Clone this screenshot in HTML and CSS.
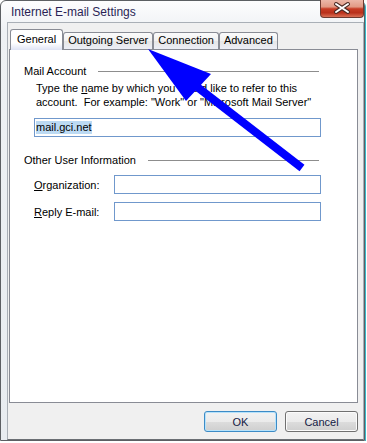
FILE: index.html
```html
<!DOCTYPE html>
<html lang="en">
<head>
    <meta charset="UTF-8">
    <meta name="viewport" content="width=device-width, initial-scale=1.0">
    <title>Internet E-mail Settings</title>
    <link rel="stylesheet" href="styles.css">
</head>
<body>
    <div class="window">
        <div class="titlebar">
            <span class="title">Internet E-mail Settings</span>
            <div class="close">
                <svg width="44" height="18" viewBox="0 0 44 18">
                    <path d="M16 5 L28 13 M28 5 L16 13" stroke="#4a2a24" stroke-width="4" stroke-linecap="round"/>
                    <path d="M16 5 L28 13 M28 5 L16 13" stroke="#fff" stroke-width="2" stroke-linecap="round"/>
                </svg>
            </div>
        </div>

        <div class="client">
            <div class="tabs">
                <div class="tab active">General</div>
                <div class="tab">Outgoing Server</div>
                <div class="tab">Connection</div>
                <div class="tab">Advanced</div>
            </div>

            <div class="panel">
                <div class="group-head"><span>Mail Account</span><i class="rule"></i></div>
                <p class="desc">Type the <u>n</u>ame by which you would like to refer to this<br>account.&nbsp; For example: "Work" or "Microsoft Mail Server"</p>
                <div class="field wide"><span class="sel">mail.gci.net</span></div>

                <div class="group-head second"><span>Other User Information</span><i class="rule"></i></div>
                <div class="row">
                    <label><u>O</u>rganization:</label>
                    <div class="field"></div>
                </div>
                <div class="row">
                    <label><u>R</u>eply E-mail:</label>
                    <div class="field"></div>
                </div>
            </div>

            <div class="buttons">
                <button class="default">OK</button>
                <button>Cancel</button>
            </div>
        </div>
    </div>

    <!-- blue pointer drawn over the dialog -->
    <svg class="arrow" width="367" height="443" viewBox="0 0 367 443">
        <line x1="192" y1="83" x2="302" y2="168" stroke="#0000ff" stroke-width="8"/>
        <polygon points="148,49 211,74 186,101" fill="#0000ff"/>
    </svg>
</body>
</html>
```

FILE: styles.css
```css
body {
    margin: 0;
    background: #fff;
    font-family: 'Liberation Sans', Arial, sans-serif;
    font-size: 11px;
    color: #000;
    position: relative;
}
.window {
    width: 365px;
    height: 441px;
    box-sizing: border-box;
    border: 1px solid #5c5f63;
    border-radius: 6px 6px 0 0;
    background: linear-gradient(#fdfdfe, #eef1f4 30px, #e8ecf0);
    box-shadow: 1px 1px 0 #35b9c9;
    display: flex;
    flex-direction: column;
}
.titlebar {
    height: 21px;
    display: flex;
    justify-content: space-between;
    align-items: flex-start;
    padding-left: 10px;
}
.title {
    font-size: 12px;
    line-height: 23px;
    color: #2a1f55;
}
.close {
    width: 44px;
    height: 18px;
    margin-top: -1px;
    box-sizing: border-box;
    border: 1px solid #6e3a30;
    border-top: none;
    border-radius: 0 0 4px 4px;
    background: linear-gradient(#ecb7a8 0%, #e29a85 40%, #c73c24 52%, #b9301b 75%, #da6f55 100%);
}
.close svg {
    display: block;
    margin: -1px 0 0 -1px;
}
.client {
    flex: 1;
    margin-left: 6px;
    border: 1px solid #a9afb6;
    border-bottom-color: #6b6f74;
    background: #f0f0f0;
    padding: 0 5px 7px 1px;
    display: flex;
    flex-direction: column;
}
.tabs {
    display: flex;
    align-items: flex-end;
    height: 20px;
    margin-top: 6px;
    padding-left: 1px;
    position: relative;
    z-index: 1;
}
.tab {
    height: 17px;
    box-sizing: border-box;
    line-height: 15px;
    padding: 0 4px;
    border: 1px solid #898c95;
    border-bottom: none;
    border-radius: 3px 3px 0 0;
    background: linear-gradient(#fbfbfb, #f1f1f1 50%, #e6e6e6 51%, #eceef6);
    white-space: nowrap;
}
.tab.active {
    height: 21px;
    margin-bottom: -1px;
    padding: 2px 6px 0;
    background: linear-gradient(#fff 65%, #dfe3f4);
}
.panel {
    flex: 1;
    background: #fff;
    border: 1px solid #898c95;
    padding: 14px 36px 0 14px;
}
.group-head {
    display: flex;
    align-items: center;
    line-height: 14px;
    margin-right: 2px;
}
.group-head.second {
    margin-top: 16px;
}
.rule {
    flex: 1;
    height: 1px;
    margin-left: 12px;
    background: #8d8d8d;
}
.desc {
    margin: 3px 0 0 12px;
    line-height: 14px;
}
.field {
    height: 19px;
    box-sizing: border-box;
    border: 1px solid #7098cc;
    background: #fff;
    flex: 1;
}
.field.wide {
    margin: 9px 0 0 10px;
    padding: 2px 1px;
    line-height: 13px;
}
.sel {
    background: #bcdaf3;
    display: inline-block;
}
.row {
    display: flex;
    align-items: center;
    margin: 8px 0 0 10px;
}
.row + .row {
    margin-top: 8px;
}
.row label {
    width: 80px;
}
.buttons {
    display: flex;
    justify-content: flex-end;
    gap: 8px;
    margin-top: 8px;
}
button {
    width: 73px;
    height: 21px;
    font-family: inherit;
    font-size: 11px;
    color: #141a44;
    border: 1px solid #707070;
    border-radius: 3px;
    box-shadow: inset 0 0 0 1px #fbfbfb;
    background: linear-gradient(#f2f2f2, #ebebeb 50%, #dddddd 51%, #cfcfcf);
    padding: 0;
}
button.default {
    border-color: #3c8bc6;
    box-shadow: inset 0 0 0 1px #b6e2fb;
}
.arrow {
    position: absolute;
    top: 0;
    left: 0;
    pointer-events: none;
}
```
